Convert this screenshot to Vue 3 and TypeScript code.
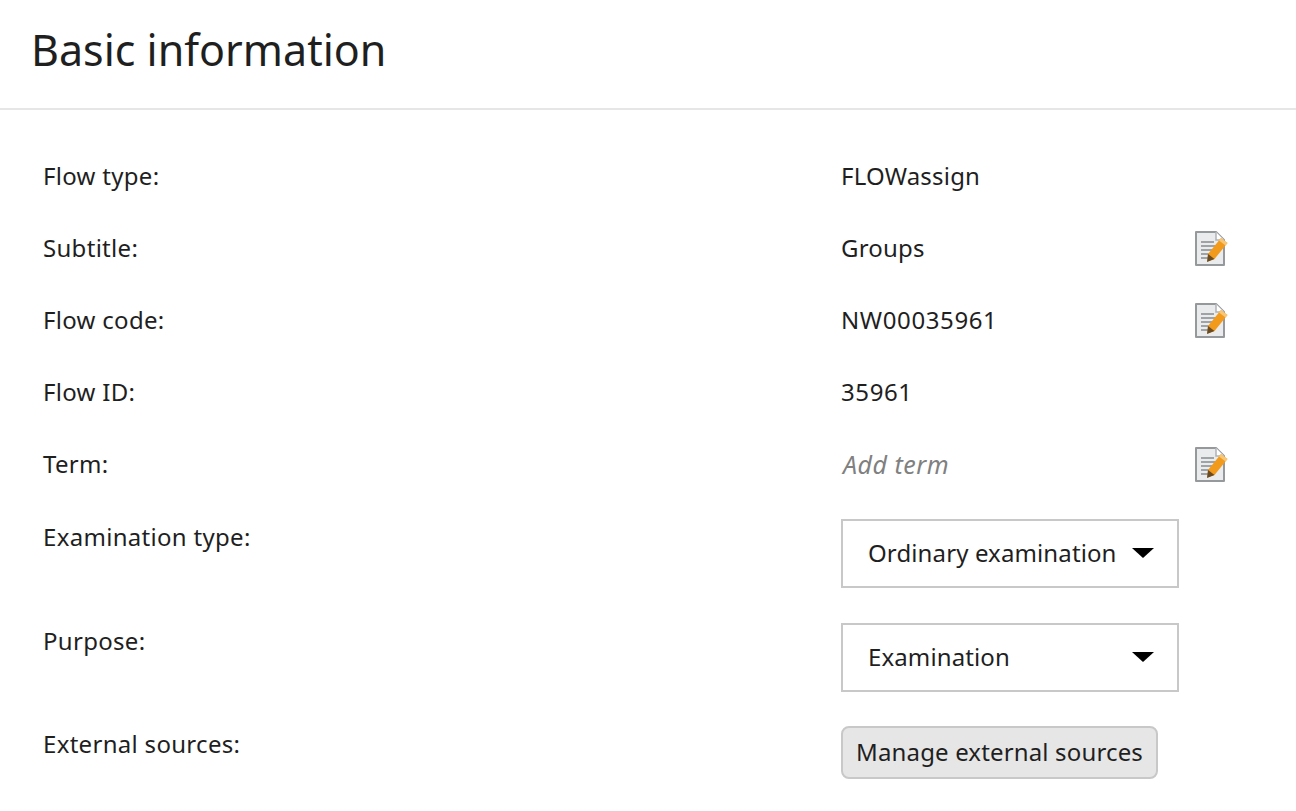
<script setup lang="ts">
interface Row { label: string; value?: string; muted?: boolean; num?: boolean; edit?: boolean }
const rows: Row[] = [
  { label: 'Flow type:', value: 'FLOWassign' },
  { label: 'Subtitle:', value: 'Groups', edit: true },
  { label: 'Flow code:', value: 'NW00035961', num: true, edit: true },
  { label: 'Flow ID:', value: '35961', num: true },
  { label: 'Term:', value: 'Add term', muted: true, edit: true },
]
</script>

<template>
  <main class="page">
    <header class="head"><h1>Basic information</h1></header>
    <section class="body">
      <div v-for="r in rows" :key="r.label" class="row">
        <div class="label">{{ r.label }}</div>
        <div class="value" :class="{ muted: r.muted, num: r.num }">{{ r.value }}</div>
        <svg v-if="r.edit" class="edit" width="34" height="38" viewBox="0 0 34 38">
          <path d="M2 3h20l8 8v25H2z" fill="#e9ebed" stroke="#96999b" stroke-width="2" stroke-linejoin="round"/>
          <path d="M22 3v8h8" fill="#fff" stroke="#b0b3b5" stroke-width="1.500"/>
          <path d="M7 13h13M7 17h15M7 21h12M7 25h9M7 29h7" stroke="#a0a3a6" stroke-width="1.800"/>
          <path d="M14 25 27 9l6.500 5-13 16-7 2.500z" fill="#f29a1c"/>
          <path d="M27 9l6.500 5-2 2.500-6.500-5z" fill="#f7c777"/>
          <path d="M14 25l6.500 5-7.500 3z" fill="#6a4a20"/>
        </svg>
      </div>
      <div class="row select-row first">
        <div class="label">Examination type:</div>
        <div class="select"><span>Ordinary examination</span><i class="caret"></i></div>
      </div>
      <div class="row select-row second">
        <div class="label">Purpose:</div>
        <div class="select"><span>Examination</span><i class="caret"></i></div>
      </div>
      <div class="row button-row">
        <div class="label">External sources:</div>
        <button class="btn" type="button">Manage external sources</button>
      </div>
    </section>
  </main>
</template>

<style>
body { background: #fff; }
</style>

<style scoped>
.page { width: 1296px; height: 811px; overflow: hidden; font-family: "Noto Sans", "Open Sans", sans-serif; color: #1f1f1f; background: #fff; }
.head { height: 108px; border-bottom: 2px solid #e6e6e6; display: flex; align-items: center; padding-left: 31px; }
h1 { margin: 0; font-size: 43px; font-weight: 400; letter-spacing: 0; line-height: 1; position: relative; top: -5px; }
.body { padding: 29px 0 0 43px; }
.row { display: flex; align-items: center; height: 72px; font-size: 24px; }
.label { width: 798px; flex: none; letter-spacing: 0.3px; }
.value { flex: none; width: 352px; letter-spacing: 0.2px; }
.num { letter-spacing: 0.6px; }
.muted { font-style: italic; color: #808080; font-size: 25px; letter-spacing: 0.5px; padding: 2px 0 0 2px; width: 350px; }
.edit { flex: none; position: relative; left: 1px; top: 1px; }
.select-row { align-items: flex-start; height: 104px; }
.select-row .label { padding-top: 1px; }
.first { margin-top: 20px; }
.second { height: 103px; }
.select { width: 338px; height: 69px; box-sizing: border-box; border: 2px solid #c8c8c8; display: flex; align-items: center; justify-content: space-between; padding: 0 23px 2px 25px; letter-spacing: 0.12px; }
.caret { width: 0; height: 0; border-left: 11px solid transparent; border-right: 11px solid transparent; border-top: 10px solid #000; }
.button-row { align-items: flex-start; }
.button-row .label { padding-top: 1px; }
.btn { width: 317px; height: 53px; border: 2px solid #c8c8c8; border-radius: 8px; background: #e6e6e6; font: inherit; letter-spacing: 0.15px; color: inherit; padding: 0 0 2px; }
</style>
